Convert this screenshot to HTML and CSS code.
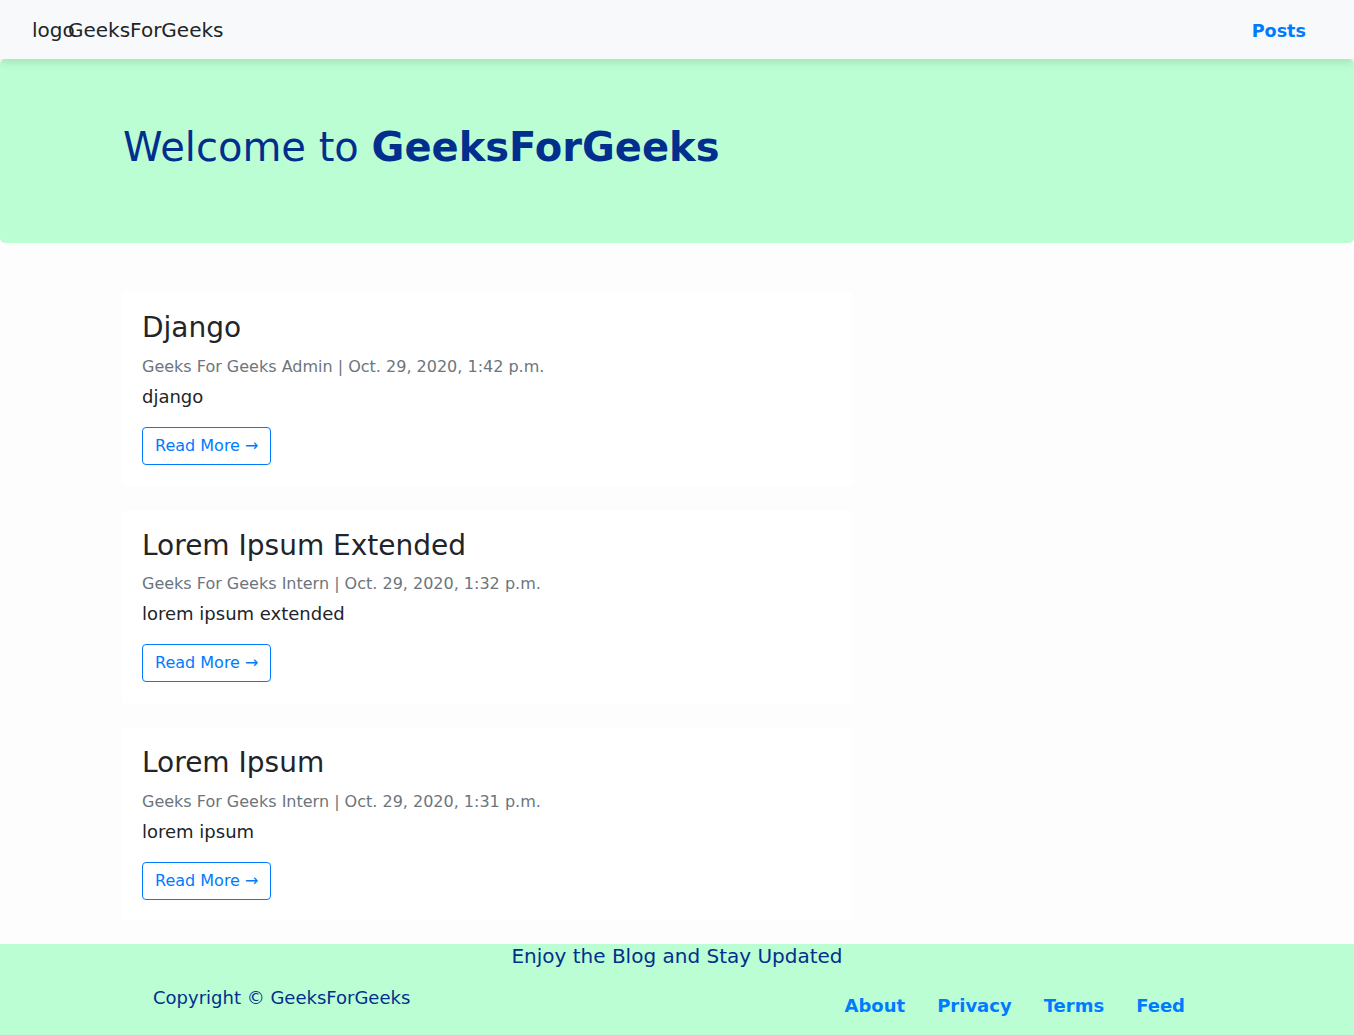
FILE: index.html
```html
<!DOCTYPE html>
<html lang="en">
<head>
<meta charset="utf-8">
<title>GeeksForGeeks Blog</title>
<link rel="stylesheet" href="styles.css">
</head>
<body>
<nav class="navbar">
  <a class="brand" href="#"><span class="logo-alt">logo</span>GeeksForGeeks</a>
  <a class="nav-link" href="#">Posts</a>
</nav>
<header class="jumbotron">
  <h1 class="welcome">Welcome to <b>GeeksForGeeks</b></h1>
</header>
<main class="content">
  <div class="posts">
    <article class="card">
      <h2 class="card-title">Django</h2>
      <p class="meta">Geeks For Geeks Admin | Oct. 29, 2020, 1:42 p.m.</p>
      <p class="card-text">django</p>
      <a class="btn" href="#">Read More &rarr;</a>
    </article>
    <article class="card">
      <h2 class="card-title">Lorem Ipsum Extended</h2>
      <p class="meta">Geeks For Geeks Intern | Oct. 29, 2020, 1:32 p.m.</p>
      <p class="card-text">lorem ipsum extended</p>
      <a class="btn" href="#">Read More &rarr;</a>
    </article>
    <article class="card">
      <h2 class="card-title">Lorem Ipsum</h2>
      <p class="meta">Geeks For Geeks Intern | Oct. 29, 2020, 1:31 p.m.</p>
      <p class="card-text">lorem ipsum</p>
      <a class="btn" href="#">Read More &rarr;</a>
    </article>
  </div>
</main>
<footer class="footer">
  <p class="tagline">Enjoy the Blog and Stay Updated</p>
  <div class="footer-row">
    <p class="copyright">Copyright &copy; GeeksForGeeks</p>
    <ul class="footer-links">
      <li><a href="#">About</a></li>
      <li><a href="#">Privacy</a></li>
      <li><a href="#">Terms</a></li>
      <li><a href="#">Feed</a></li>
    </ul>
  </div>
</footer>
</body>
</html>
```
FILE: styles.css
```css
* { box-sizing: border-box; }
html, body { margin: 0; padding: 0; }
body {
  font-family: "DejaVu Sans", "Liberation Sans", sans-serif;
  color: #212529;
  background: #fdfdfd;
  font-size: 16px;
  line-height: 1.5;
}
a { text-decoration: none; }

.navbar {
  position: relative;
  z-index: 2;
  height: 59px;
  background: #f8f9fa;
  display: flex;
  align-items: center;
  justify-content: space-between;
  padding: 0 48px 0 32px;
  box-shadow: 0 2px 10px rgba(0, 0, 0, 0.15);
}
.brand {
  color: #212529;
  font-size: 20px;
  line-height: 30px;
  white-space: nowrap;
  margin-top: 1px;
}
.logo-alt {
  display: inline-block;
  width: 36px;
  white-space: nowrap;
  overflow: visible;
}
.nav-link {
  color: #007bff;
  font-weight: bold;
  font-size: 17.6px;
  margin-top: 3px;
}

.jumbotron {
  position: relative;
  z-index: 1;
  background: #bcfed3;
  border-radius: 5px;
  height: 184px;
  padding: 64px 123px 0;
}
.welcome {
  margin: 0;
  font-size: 40px;
  font-weight: normal;
  line-height: 1.2;
  color: #022f8e;
}
.welcome b { font-weight: bold; }

.content {
  padding: 49px 122px 23px;
}
.posts {
  width: 730px;
  display: flex;
  flex-direction: column;
  gap: 24px;
}
.card {
  background: #ffffff;
  border-radius: 4px;
  padding: 19px 20px 21px;
}
.card-title {
  margin: 0 0 10px;
  font-size: 28px;
  font-weight: normal;
  line-height: 1.2;
}
.meta {
  margin: 0 0 4px;
  color: #6c757d;
  font-size: 16px;
  line-height: 24px;
}
.card-text {
  margin: 0 0 17px;
  font-size: 18px;
  line-height: 27px;
}
.btn {
  display: inline-block;
  color: #007bff;
  border: 1px solid #007bff;
  border-radius: 4px;
  padding: 6px 12px;
  font-size: 16px;
  line-height: 24px;
}

.footer {
  background: #bcfed3;
  color: #022f8e;
  height: 91px;
}
.tagline {
  margin: 0;
  text-align: center;
  font-size: 20px;
  line-height: 24px;
}
.footer-row {
  display: flex;
  justify-content: space-between;
  align-items: flex-start;
  padding: 0 169px 0 153px;
}
.copyright {
  margin: 16px 0 0;
  font-size: 18px;
  line-height: 27px;
}
.footer-links {
  list-style: none;
  display: flex;
  gap: 32px;
  margin: 24px 0 0;
  padding: 0;
}
.footer-links a {
  color: #007bff;
  font-weight: bold;
  font-size: 18px;
  line-height: 27px;
}
```
